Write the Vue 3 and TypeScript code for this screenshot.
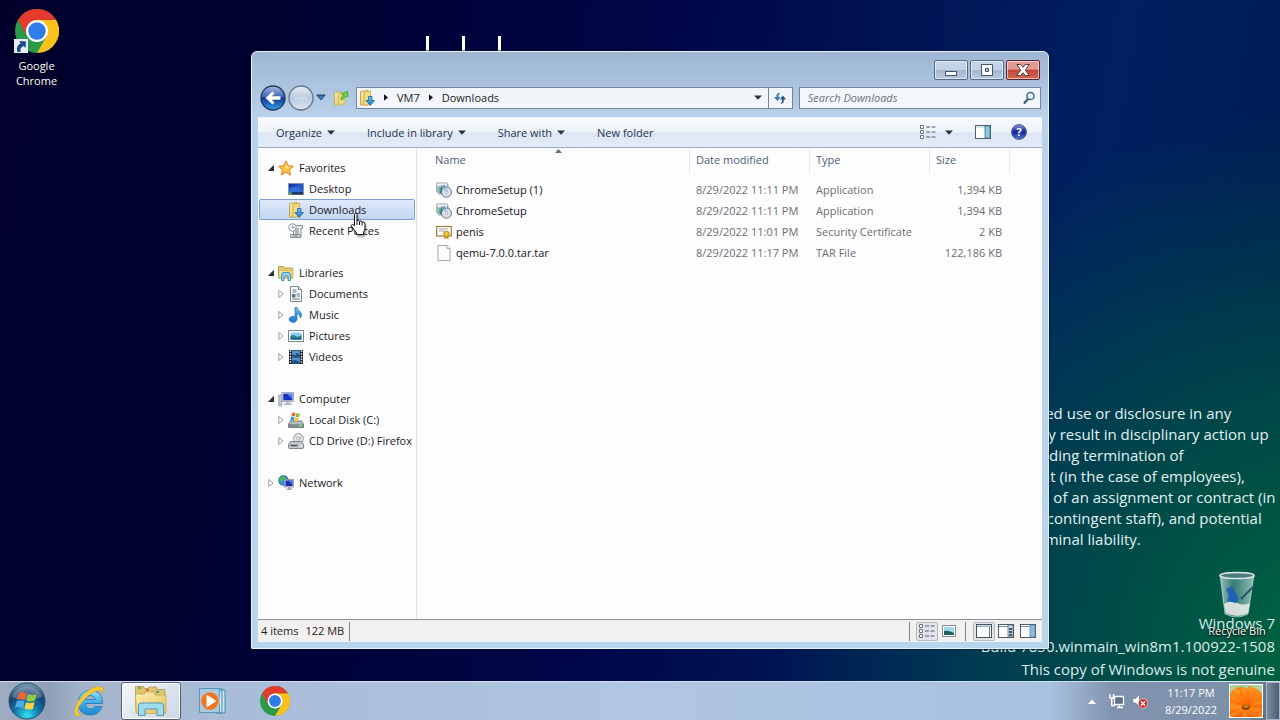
<script setup lang="ts">
import { ref } from 'vue'

interface NavItem { label: string; icon: string }
interface NavGroup { label: string; icon: string; open: boolean; twisty: boolean; items: NavItem[] }
interface FileRow { name: string; icon: string; date: string; type: string; size: string }

const groups: NavGroup[] = [
  {
    label: 'Favorites', icon: 'star', open: true, twisty: false,
    items: [
      { label: 'Desktop', icon: 'desktop' },
      { label: 'Downloads', icon: 'downloads' },
      { label: 'Recent Places', icon: 'recent' },
    ],
  },
  {
    label: 'Libraries', icon: 'libraries', open: true, twisty: true,
    items: [
      { label: 'Documents', icon: 'document' },
      { label: 'Music', icon: 'music' },
      { label: 'Pictures', icon: 'picture' },
      { label: 'Videos', icon: 'video' },
    ],
  },
  {
    label: 'Computer', icon: 'computer', open: true, twisty: true,
    items: [
      { label: 'Local Disk (C:)', icon: 'disk' },
      { label: 'CD Drive (D:) Firefox', icon: 'cd' },
    ],
  },
  { label: 'Network', icon: 'network', open: false, twisty: true, items: [] },
]

const files: FileRow[] = [
  { name: 'ChromeSetup (1)', icon: 'setup', date: '8/29/2022 11:11 PM', type: 'Application', size: '1,394 KB' },
  { name: 'ChromeSetup', icon: 'setup', date: '8/29/2022 11:11 PM', type: 'Application', size: '1,394 KB' },
  { name: 'penis', icon: 'cert', date: '8/29/2022 11:01 PM', type: 'Security Certificate', size: '2 KB' },
  { name: 'qemu-7.0.0.tar.tar', icon: 'blank', date: '8/29/2022 11:17 PM', type: 'TAR File', size: '122,186 KB' },
]

const notice: string[] = [
  'Unauthorized use or disclosure in any',
  'manner may result in disciplinary action up',
  'to and including termination of',
  'employment (in the case of employees),',
  'termination of an assignment or contract (in',
  'the case of contingent staff), and potential',
  'civil and criminal liability.',
]

const menus = [
  { label: 'Organize', drop: true },
  { label: 'Include in library', drop: true },
  { label: 'Share with', drop: true },
  { label: 'New folder', drop: false },
]

const selected = ref('Downloads')
const query = ref('')
</script>

<template>
  <div class="screen">
    <svg class="defs" aria-hidden="true">
      <defs>
        <linearGradient id="gFolder" x1="0" y1="0" x2="1" y2="1"><stop offset="0" stop-color="#fbf0b4" /><stop offset="1" stop-color="#e3c25c" /></linearGradient>
        <linearGradient id="gScreen" x1="0" y1="0" x2="1" y2="1"><stop offset="0" stop-color="#0a1c9c" /><stop offset=".5" stop-color="#2a5fd0" /><stop offset="1" stop-color="#0a2ba8" /></linearGradient>
        <linearGradient id="gBlue" x1="0" y1="0" x2="0" y2="1"><stop offset="0" stop-color="#6fc3f2" /><stop offset="1" stop-color="#1976c4" /></linearGradient>
        <linearGradient id="gBack" x1="0" y1="0" x2="0" y2="1"><stop offset="0" stop-color="#a9bfe6" /><stop offset=".45" stop-color="#3c63b4" /><stop offset=".5" stop-color="#11348f" /><stop offset="1" stop-color="#2fa2e6" /></linearGradient>
        <linearGradient id="gFwd" x1="0" y1="0" x2="0" y2="1"><stop offset="0" stop-color="#e9f0f8" /><stop offset=".5" stop-color="#b8c8db" /><stop offset="1" stop-color="#dbe8f4" /></linearGradient>
        <radialGradient id="gOrb" cx=".5" cy=".9" r=".85"><stop offset="0" stop-color="#35e0f5" /><stop offset=".4" stop-color="#1279ad" /><stop offset=".75" stop-color="#17406e" /><stop offset="1" stop-color="#6f93ad" /></radialGradient>
        <linearGradient id="gIe" x1="0" y1="0" x2="0" y2="1"><stop offset="0" stop-color="#9be3fb" /><stop offset=".5" stop-color="#3daeea" /><stop offset="1" stop-color="#1f86d3" /></linearGradient>
        <linearGradient id="gBin" x1="0" y1="0" x2="1" y2="0"><stop offset="0" stop-color="#b9d6d8" stop-opacity=".85" /><stop offset=".4" stop-color="#5d949a" stop-opacity=".6" /><stop offset="1" stop-color="#b4d4d0" stop-opacity=".85" /></linearGradient>
        <linearGradient id="gPetal" x1="0" y1="0" x2="0" y2="1"><stop offset="0" stop-color="#ffa024" /><stop offset="1" stop-color="#ff5c00" /></linearGradient>
        <symbol id="star" viewBox="0 0 16 16"><path d="M8 .8 10.2 5.7 15.4 6.2 11.5 9.8 12.7 15 8 12.3 3.3 15 4.5 9.8.6 6.2 5.8 5.7Z" fill="#fdc33e" stroke="#d9812c" /><path d="M8 2.6 9.5 6.6 13 7 8 9Z" fill="#ffe79a" /></symbol>
        <symbol id="desktop" viewBox="0 0 16 16"><rect x=".5" y="2.5" width="15" height="11" fill="url(#gScreen)" stroke="#8795a8" /><path d="M1 7Q8 4 15 9V11H1Z" fill="#3979dd" opacity=".7" /><path d="M1 12.5H15" stroke="#20304a" stroke-width="2" /><path d="M1 12.5H4" stroke="#55b865" stroke-width="2" /></symbol>
        <symbol id="downloads" viewBox="0 0 16 16"><path d="M1.5 1.5 9 .5V15H1.5Z" fill="url(#gFolder)" stroke="#c7a747" /><path d="M5 2.5 11.5 1V14L5 15.5Z" fill="#f1dc86" stroke="#d1b55a" /><path d="M9.5 6.5h3.5v4h2.5L11.2 15.5 7 10.5h2.5Z" fill="url(#gBlue)" stroke="#1b639f" stroke-width=".8" /></symbol>
        <symbol id="recent" viewBox="0 0 16 16"><path d="M5.500 2.500h9v3H13V14H5.500Z" fill="#eef0f2" stroke="#858c94" /><path d="M2.500 11.500h10v3h-10z" fill="#d6dade" stroke="#858c94" /><path d="M7 6h4M7 8h4M7 10h4M5 13h5" stroke="#7a828c" /><circle cx="4.500" cy="4.500" r="3.800" fill="#fafafa" stroke="#8f969f" /><path d="M4.500 2.500v2h2" fill="none" stroke="#596069" stroke-width=".8" /></symbol>
        <symbol id="libraries" viewBox="0 0 16 16"><path d="M.5 3.500V1.500h5l1 1.500h8v10H.5Z" fill="#e5cd70" stroke="#bb9f48" /><path d="M1 5.500h14V13H1Z" fill="url(#gFolder)" stroke="#c5aa50" stroke-width=".7" /><path d="M3.500 15.500V10q0-2.500 2.500-2.500h4q2.500 0 2.500 2.500v5.500H10V11H6v4.500Z" fill="#8fd2f0" stroke="#3d8fbd" stroke-width=".9" /></symbol>
        <symbol id="document" viewBox="0 0 16 16"><path d="M2.500.5h8l3 3v12h-11Z" fill="#fdfdfe" stroke="#78868f" /><path d="M10.500.5v3h3" fill="#d8dfe4" stroke="#78868f" /><path d="M4.500 4h4M4.500 6h4M8.500 8H12M8.500 10H12M4.500 13H12" stroke="#60727e" /><path d="M4 8h3.500v3.500H4z" fill="#47749a" /></symbol>
        <symbol id="music" viewBox="0 0 16 16"><path d="M7 .5h2c.3 3 4.500 3.600 4.500 7.200 0 1.500-.7 2.600-1.500 3.300.4-2.500-.8-3.800-3-4.300V12.500A3.900 3 0 1 1 7 9.700Z" fill="url(#gBlue)" stroke="#1d6ba9" stroke-width=".7" /></symbol>
        <symbol id="picture" viewBox="0 0 16 16"><rect x=".5" y="2.500" width="15" height="11" fill="#fff" stroke="#7c868e" /><path d="M2.500 4.500h11v7h-11z" fill="#8bd1ef" /><path d="M2.500 8q3-2 5 0t6-1v4.500h-11z" fill="#2c7f82" /><path d="M2.500 10h11v1.500h-11z" fill="#26579a" /></symbol>
        <symbol id="video" viewBox="0 0 16 16"><path d="M1 1h14v14H1z" fill="#20262c" /><path d="M4 1.500h8V7.500H4zM4 8.500h8v6H4z" fill="#4b94d0" /><path d="M4 5 7 6.500 9 4 12 6v1.500H4zM4 12l3-1 5 2v1.500H4z" fill="#1d5080" /><path d="M2.500 1.500V15M13.500 1.500V15" stroke="#e7eef3" stroke-width="1.400" stroke-dasharray="1.500 1.200" /></symbol>
        <symbol id="computer" viewBox="0 0 16 16"><path d="M.8 4h3v11h-3z" fill="#c4c9cf" stroke="#8b9299" stroke-width=".7" /><rect x="4" y="1.500" width="11.500" height="9" fill="#cdd3da" stroke="#949ba4" stroke-width=".8" /><path d="M5.300 2.800h9v6.400h-9z" fill="#1730c4" /><path d="M9 2.800h5.300V8Z" fill="#5585ec" /><path d="M8.500 10.500h3v2H14v1.500H6v-1.500h2.500z" fill="#aeb5bd" /></symbol>
        <symbol id="disk" viewBox="0 0 16 16"><path d="M2.500 9h11l2 3v3.500H.5V12Z" fill="#b5bfbc" stroke="#5e6a68" stroke-width=".8" /><path d="M1 12.200h14v3H1z" fill="#7c8c88" /><path d="M11 13.500h3" stroke="#79ec75" stroke-width="1.400" /><path d="M4 1Q5.500 0 7.500 1L6.800 4.500Q5 3.700 3.200 4.500Z" fill="#ee6b32" /><path d="M8.200 1.300Q10 2 12 1.200L11 4.900Q9.300 5.500 7.500 4.800Z" fill="#86bb36" /><path d="M3 5.200Q5 4.500 6.600 5.300L5.900 8.800Q4 8 2.200 8.800Z" fill="#3c96d9" /><path d="M7.300 5.700Q9 6.300 10.900 5.700L10 9.300Q8.300 9.900 6.600 9.200Z" fill="#f5c22c" /></symbol>
        <symbol id="cd" viewBox="0 0 16 16"><circle cx="10.500" cy="5.500" r="5" fill="#e6e8ea" stroke="#898e94" stroke-width=".8" /><path d="M10.500 5.500 7 2.500M10.500 5.500 14.500 3.500" stroke="#b2b8bf" /><circle cx="10.500" cy="5.500" r="1.500" fill="#fff" stroke="#84898e" stroke-width=".8" /><path d="M2.500 8.500h11l2 3v3q0 1-1 1h-13q-1 0-1-1v-3Z" fill="#c5c9cd" stroke="#686d72" stroke-width=".8" /><path d="M2.500 12.500h7" stroke="#4c5156" stroke-width="1.300" /><path d="M11.500 13h2.500" stroke="#fff" /></symbol>
        <symbol id="network" viewBox="0 0 16 16"><circle cx="5.500" cy="5.500" r="5" fill="#3690cf" stroke="#1d628f" stroke-width=".6" /><path d="M2 3Q5 0 7 2T4 6 2 8Q0 5 2 3M6 6l3 1-2 3Z" fill="#50b85a" /><rect x="6.500" y="4.500" width="9" height="7.500" fill="#c9d2dc" stroke="#7e8896" stroke-width=".7" /><path d="M7.500 5.500h7v5.500h-7z" fill="#1330b8" /><path d="M10 5.500h4.500V10Z" fill="#4676de" /><path d="M10 12h2.500v1.500H14V15H8.500v-1.500H10z" fill="#a1a9b3" /></symbol>
        <symbol id="setup" viewBox="0 0 16 16"><path d="M.8 1h10l1.200 2v9H3L.8 9Z" fill="#b9cbd5" stroke="#71838f" stroke-width=".8" /><path d="M1 1.500h10v2H1z" fill="#eff6fa" /><path d="M2.500 5h4v5h-4z" fill="#6bb58a" /><path d="M6 3.500 4.500 11M8 3v4" stroke="#36658c" /><circle cx="10.500" cy="10.200" r="5" fill="#dce5ee" stroke="#4e657d" stroke-width=".9" /><path d="M10.500 10.200 7 7A5 5 0 0 1 12 5.500Z" fill="#a8c9e9" /><circle cx="10.500" cy="10.200" r="1.400" fill="#fff" stroke="#6f8499" stroke-width=".6" /></symbol>
        <symbol id="cert" viewBox="0 0 16 16"><rect x=".7" y="2.500" width="14.600" height="9.500" fill="#fffef6" stroke="#96803f" stroke-width="1.200" /><path d="M3 5h9M3 7h6" stroke="#9b9c9c" stroke-width=".9" /><path d="m9 11-.8 4.500L10.500 14l2.300 1.500L12 11Z" fill="#bd8c17" /><circle cx="10.500" cy="10" r="2.800" fill="#f3c836" stroke="#a3780e" stroke-width=".8" /></symbol>
        <symbol id="blank" viewBox="0 0 16 16"><path d="M2 .5h9l3 3v12H2Z" fill="#fdfdfd" stroke="#a8a8a8" /><path d="M11 .5v3h3" fill="#ececec" stroke="#a8a8a8" /></symbol>
        <symbol id="upfolder" viewBox="0 0 16 16"><path d="M1.500 3 8 1.500V15H1.500Z" fill="url(#gFolder)" stroke="#c5ab50" stroke-width=".8" /><path d="M5.500 4 12 2v11.500L5.500 15.500Z" fill="#efd883" stroke="#cdb055" stroke-width=".7" /><path d="M7.500 8.500 10.500 5 8.500 4 14.500 1l.5 6-2-1-3.500 4Z" fill="#6fd244" stroke="#359326" stroke-width=".7" /></symbol>
        <symbol id="list" viewBox="0 0 16 14"><path d="M.5.5h3v3h-3zM.5 5.500h3v3h-3zM.5 10.500h3v3h-3z" fill="#fff" stroke="#68747e" /><path d="M6 2h4M11.500 2h4M6 7h4M11.500 7h4M6 12h4M11.500 12h4" stroke="#4b5b6c" stroke-width="1.200" /></symbol>
        <symbol id="pane" viewBox="0 0 16 14"><rect x=".5" y=".5" width="15" height="13" fill="#fff" stroke="#4f6173" /><path d="M1 1h9v2H1z" fill="#d8e3ea" /><path d="M10 1h5v12h-5z" fill="#86cde0" stroke="#3c7088" stroke-width=".8" /></symbol>
        <symbol id="pane1" viewBox="0 0 16 14"><rect x=".5" y=".5" width="15" height="13" fill="#fff" stroke="#3f5263" /><path d="M1 2.500h14M13.500 3v10" stroke="#5c7788" /><path d="M1 1h14v1.500H1z" fill="#cfe1e9" /></symbol>
        <symbol id="pane2" viewBox="0 0 16 14"><rect x=".5" y=".5" width="15" height="13" fill="#fff" stroke="#4c5c6c" /><path d="M1 2.500h9" stroke="#7c909f" /><path d="M10 1h5v12h-5z" fill="#c7dbe8" stroke="#4c5c6c" stroke-width=".7" /><path d="M11 5h3M11 8h3M11 11h3" stroke="#1d2a35" stroke-width="1.500" /></symbol>
        <symbol id="pane3" viewBox="0 0 16 14"><rect x=".5" y=".5" width="15" height="13" fill="#fff" stroke="#4c5c6c" /><path d="M1 2.500h9" stroke="#7c909f" /><path d="M10 1h5v12h-5z" fill="#8dbce2" stroke="#56809f" stroke-width=".7" /></symbol>
        <symbol id="caret" viewBox="0 0 8 5"><path d="M0 .5h8L4 4.800Z" fill="#233446" /></symbol>
        <symbol id="chrome" viewBox="0 0 48 48">
          <circle cx="24" cy="24" r="24" fill="#2b9a4a" />
          <path d="M3.200 12A24 24 0 0 1 44.800 12H24Z" fill="#e33b2e" />
          <path d="M3.200 12 13.600 30 24 24V12Z" fill="#e33b2e" />
          <path d="M44.800 12A24 24 0 0 1 24 48L34.400 30 24 12Z" fill="#fcc21b" />
          <circle cx="24" cy="24" r="12" fill="#fff" />
          <circle cx="24" cy="24" r="9.500" fill="#2f7be8" />
        </symbol>
      </defs>
    </svg>

    <main class="desktop">
      <button class="shortcut">
        <span class="shortcut-pic">
          <svg class="i44"><use href="#chrome" /></svg>
          <svg class="badge" viewBox="0 0 14 14"><rect width="14" height="14" fill="#e6edf5" /><path d="M3.500 13C2 8.500 4 5.500 6.500 4.800L5.500 2 12 2.500 11.500 9 9.500 7C7 8 6 10 6.500 13Z" fill="#1c4a8c" /></svg>
        </span>
        <span>Google Chrome</span>
      </button>

      <div class="ticks"><i></i><i></i><i></i></div>

      <div class="notice">
        <p v-for="line in notice" :key="line">{{ line }}</p>
      </div>

      <div class="watermark">
        <p>Windows 7</p>
        <p>Build 7850.winmain_win8m1.100922-1508</p>
        <p>This copy of Windows is not genuine</p>
      </div>

      <button class="bin">
        <svg viewBox="0 0 40 48">
          <path d="M3 4 8 43Q20 49 31 43L37 4Z" fill="url(#gBin)" stroke="#d6e6e6" stroke-opacity=".6" />
          <path d="M7 33Q13 29 20 32T33 32L31 42Q20 48 9 42Z" fill="#e5e8e6" opacity=".9" />
          <path d="M9 18 15 15 18 21 22 28 19 32 10 30 12 25Z" fill="#1b5fb8" opacity=".9" />
          <path d="M24 28 36 16" stroke="#28555e" stroke-width="2" />
          <ellipse cx="20" cy="4.500" rx="17" ry="3" fill="#4c7b80" stroke="#dfe9e9" stroke-width="1.500" />
        </svg>
        <span>Recycle Bin</span>
      </button>

      <section class="window" aria-label="Downloads">
        <header class="title">
          <button class="cap" aria-label="Minimize"><svg viewBox="0 0 14 14"><rect x="1.500" y="8.500" width="11" height="4" fill="#fff" stroke="#46536b" /></svg></button>
          <button class="cap" aria-label="Maximize"><svg viewBox="0 0 14 14"><path d="M1.500 1.500h11v11h-11zM5.500 5.500v3h3v-3z" fill="#fff" fill-rule="evenodd" stroke="#46536b" /></svg></button>
          <button class="cap close" aria-label="Close"><svg viewBox="0 0 14 14"><path d="M.8 1.500h4L7 4.300 9.200 1.500h4L9.300 7l3.900 5.500h-4L7 9.700 4.800 12.500h-4L4.700 7Z" fill="#fff" stroke="#5b2b33" stroke-width=".9" /></svg></button>
        </header>

        <div class="navbar">
          <button class="round back" aria-label="Back"><svg viewBox="0 0 26 26"><circle cx="13" cy="13" r="12" fill="url(#gBack)" stroke="#26375f" stroke-width="1.300" /><path d="M5.500 13 12.500 6.500 14.500 8.500 11.800 11.300H20.500V14.800H11.800L14.500 17.600 12.500 19.600Z" fill="#fff" /></svg></button>
          <button class="round fwd" aria-label="Forward"><svg viewBox="0 0 26 26"><circle cx="13" cy="13" r="12" fill="url(#gFwd)" stroke="#65778f" stroke-width="1.300" /><path d="M20 13 14 7.500 12.500 9 15 11.700H6.500V14.400H15L12.500 17 14 18.500Z" fill="#cbd7e5" /></svg></button>
          <button class="recentmenu" aria-label="Recent pages"><svg viewBox="0 0 10 7"><path d="M.8 1h8.400L5 5.800Z" fill="#2e83c0" stroke="#1b3960" /></svg></button>
          <button class="up" aria-label="Up"><svg class="i16"><use href="#upfolder" /></svg></button>
          <div class="address">
            <svg class="i16"><use href="#downloads" /></svg>
            <svg class="tri" viewBox="0 0 5 8"><path d="M0 0 5 4 0 8Z" /></svg>
            <button>VM7</button>
            <svg class="tri" viewBox="0 0 5 8"><path d="M0 0 5 4 0 8Z" /></svg>
            <button>Downloads</button>
            <button class="addrdrop" aria-label="Previous locations"><svg class="caret"><use href="#caret" /></svg></button>
            <button class="refresh" aria-label="Refresh"><svg viewBox="0 0 14 14"><path d="M7 2Q3 1.500 3.500 6H1L4.500 10 7.500 6H5.500Q5 4 7 2Z" fill="#3a73ad" /><path d="M7.500 13Q11.500 12.500 10.700 8.500H13L10 4.500 6.700 8.500H9Q9.500 11 7.500 13Z" fill="#23588f" /></svg></button>
          </div>
          <label class="search">
            <input v-model="query" type="text" placeholder="Search Downloads" aria-label="Search Downloads">
            <svg class="lens" viewBox="0 0 14 14"><circle cx="8.500" cy="5" r="3.600" fill="#eef6fc" stroke="#3b6f9b" stroke-width="1.500" /><path d="M6 8 2 12.500" stroke="#36597d" stroke-width="2.200" /></svg>
          </label>
        </div>

        <div class="client">
          <div class="toolbar">
            <button v-for="m in menus" :key="m.label" class="menu">{{ m.label }}<svg v-if="m.drop" class="caret"><use href="#caret" /></svg></button>
            <div class="tools">
              <button aria-label="Change your view"><svg class="pic"><use href="#list" /></svg></button>
              <button class="more" aria-label="More options"><svg class="caret"><use href="#caret" /></svg></button>
              <button class="paneb" aria-label="Show the preview pane"><svg class="pic"><use href="#pane" /></svg></button>
              <button class="help" aria-label="Help">?</button>
            </div>
          </div>

          <div class="body">
            <nav class="tree">
              <div v-for="g in groups" :key="g.label" class="group">
                <button class="node">
                  <svg v-if="g.open" class="twist" viewBox="0 0 8 8"><path d="M7 .8V7H.8Z" fill="#303030" /></svg>
                  <svg v-else class="twist" viewBox="0 0 8 8"><path d="M1.800.5 6 4 1.800 7.500Z" fill="#fff" stroke="#9a9a9a" /></svg>
                  <svg class="i16"><use :href="'#' + g.icon" /></svg><span>{{ g.label }}</span>
                </button>
                <button
                  v-for="it in g.items" :key="it.label" class="node child"
                  :class="{ selected: selected === it.label }" @click="selected = it.label"
                >
                  <svg class="twist" viewBox="0 0 8 8"><path v-if="g.twisty" d="M1.800.5 6 4 1.800 7.500Z" fill="#fff" stroke="#9a9a9a" /></svg>
                  <svg class="i16"><use :href="'#' + it.icon" /></svg><span>{{ it.label }}</span>
                </button>
              </div>
            </nav>

            <div class="list">
              <table>
                <colgroup><col class="c-name"><col class="c-date"><col class="c-type"><col class="c-size"><col></colgroup>
                <thead>
                  <tr>
                    <th class="sorted">Name<svg viewBox="0 0 7 4"><path d="M0 4 3.500 0 7 4Z" fill="#5d7186" /></svg></th>
                    <th>Date modified</th><th>Type</th><th>Size</th><td></td>
                  </tr>
                </thead>
                <tbody>
                  <tr v-for="f in files" :key="f.name">
                    <td class="name"><div><svg class="i16"><use :href="'#' + f.icon" /></svg>{{ f.name }}</div></td>
                    <td>{{ f.date }}</td><td>{{ f.type }}</td><td class="size">{{ f.size }}</td><td></td>
                  </tr>
                </tbody>
              </table>
            </div>
          </div>

          <footer class="status">
            <span class="counts"><span>4 items</span><span>122 MB</span></span>
            <span class="modes">
              <button class="on" aria-label="Details view"><svg class="pic"><use href="#list" /></svg></button>
              <button aria-label="Large icons view"><svg class="pic" viewBox="0 0 16 14"><rect x="1.500" y="1.500" width="13" height="11" fill="#fff" stroke="#7d8a92" /><path d="M3 3h10v8H3z" fill="#9edbe6" /><path d="M3 7q4-1 10 2v2H3z" fill="#23605c" /></svg></button>
            </span>
            <span class="modes last">
              <button class="on" aria-label="Plain layout"><svg class="pic"><use href="#pane1" /></svg></button>
              <button aria-label="Details layout"><svg class="pic"><use href="#pane2" /></svg></button>
              <button aria-label="Preview layout"><svg class="pic"><use href="#pane3" /></svg></button>
            </span>
          </footer>
        </div>
      </section>

      <svg class="pointer" viewBox="0 0 17 24"><path d="M5 1.500Q6.700.5 7 2.500V9Q8.500 7.500 9.500 9.200 11 8 12 10 14.500 9 15 12V16Q15 19 13.500 20.500V22.500H6.500V20.500Q4 18 1 13.500 2 11.500 4.500 13.500V2.500Z" fill="#fff" stroke="#101018" /><path d="M7 9v4M9.500 9.500V13M12 10.200V13.500" stroke="#101018" fill="none" /></svg>
    </main>

    <footer class="taskbar">
      <button class="orb" aria-label="Start">
        <svg viewBox="0 0 38 38"><circle cx="19" cy="19" r="18" fill="url(#gOrb)" stroke="#2d4f70" /><path d="M4 15A16 16 0 0 1 34 15Q19 21 4 15Z" fill="#fff" opacity=".25" />
          <path d="M11 11Q14 9 18.500 11.500L17 18Q13 16 9 18Z" fill="#f0642d" /><path d="M20 12Q24 14 28.500 12L27 18.500Q23 20.500 18.500 18.700Z" fill="#93cb3e" /><path d="M8.700 19.500Q12.500 17.500 16.600 19.500L15 26Q11 24 7 26Z" fill="#49aef0" /><path d="M18 20.200Q22 22 26.500 20L25 26.800Q21 28.500 16.500 26.500Z" fill="#fdd23c" /></svg>
      </button>
      <button class="task" aria-label="Internet Explorer">
        <svg viewBox="0 0 34 34"><path d="M30.500 19.500H13.500Q14 25 18.500 25 21.500 25 22.800 22.500H30Q27 31 18.500 31 6.500 31 6.500 18.700 6.500 6.500 18.500 6.500 31 7 30.500 19.500ZM13.500 15.500H23.500Q22.800 11.500 18.500 11.500 14.300 11.500 13.500 15.500Z" fill="url(#gIe)" stroke="#2376ae" stroke-width=".8" /><path d="M8 31.500Q2 34.500 2.500 27 4 17 14 8.500T30.500 3.500Q32.500 5 30.500 10 30.500 5 25.500 6.500 17 9 10.500 17.500T6 28.500Q6.500 31.500 10 30Z" fill="#f6cc33" stroke="#cf9b1d" stroke-width=".5" /></svg>
      </button>
      <button class="task active" aria-label="Windows Explorer">
        <svg viewBox="0 0 34 34"><path d="M1.500 6V2.500h8l1 2H14l1-1.500h7l1 2.500h8V29h-29Z" fill="#dfc66a" stroke="#a98e3f" stroke-width=".7" /><path d="M1.500 10h9l1-2H20l1 3h11v18.500H2.500Z" fill="url(#gFolder)" stroke="#c2a450" stroke-width=".7" /><path d="M4 4h3" stroke="#47a057" stroke-width="1.500" /><path d="M12 6h3" stroke="#c34a36" stroke-width="1.500" /><path d="M22 8h3" stroke="#3c80c4" stroke-width="1.500" /><path d="M4.500 31.500V22q0-3 3-3h19q3 0 3 3v9.500H23V25H11v6.500Z" fill="#9edcf0" stroke="#5198b8" /></svg>
      </button>
      <button class="task" aria-label="Windows Media Player">
        <svg viewBox="0 0 34 34"><path d="M24 6h5v23h-5M20 5h6v24h-6" fill="#c9e6f3" stroke="#4389b5" /><rect x="3.500" y="4.500" width="20" height="24" fill="#a5cbe3" stroke="#5c95ba" /><circle cx="14" cy="17" r="9.500" fill="#ee7522" stroke="#b9c8d2" stroke-width="1.500" /><path d="M10.500 10.500 20.500 17 10.500 23.500Z" fill="#fff" /></svg>
      </button>
      <button class="task" aria-label="Google Chrome"><svg class="i30"><use href="#chrome" /></svg></button>

      <div class="tray">
        <button aria-label="Show hidden icons"><svg class="up-tri" viewBox="0 0 8 5"><path d="M0 5 4 .5 8 5Z" fill="#fff" /></svg></button>
        <button aria-label="Network"><svg class="i16" viewBox="0 0 16 16"><path d="M5.500 3.500h9v8h-9zM8 14.500h6M10.500 12v2.500" fill="#5e718a" stroke="#fff" stroke-width="1.300" /><path d="M1 1v4h3.500V1M2.700 5v7.500H6" fill="none" stroke="#fff" stroke-width="1.400" /></svg></button>
        <button aria-label="Volume muted"><svg class="i16" viewBox="0 0 16 16"><path d="M.8 5.500h2.500L7.500 1.500v12L3.300 10H.8Z" fill="#fff" stroke="#51617b" stroke-width=".6" /><circle cx="11" cy="10.500" r="4.700" fill="#d92b25" stroke="#fff" stroke-width=".5" /><path d="m9 8.500 4 4m0-4-4 4" stroke="#fff" stroke-width="1.500" /></svg></button>
        <button class="clock"><span>11:17 PM</span><span>8/29/2022</span></button>
        <button class="user" aria-label="User account">
          <svg viewBox="0 0 32 32"><rect width="32" height="32" fill="#f88b1c" /><path d="M0 0h32v8L24 3 16 6 8 2 0 8Z" fill="#b5cf9a" />
            <g stroke="#f06a00" stroke-width=".5" fill="url(#gPetal)"><path d="M16 21 10 2 18 4Z" /><path d="M16 21 19 1 27 5Z" /><path d="M16 21 2 6 9 3Z" /><path d="M16 21 28 5 32 13Z" /><path d="M16 21 0 10 0 17Z" /><path d="M16 21 32 16 32 23Z" /><path d="M16 21 0 20 0 29Z" /><path d="M16 21 32 26 27 32Z" /><path d="M16 21 4 32 12 32Z" /><path d="M16 21 17 32 25 32Z" /></g>
            <ellipse cx="16" cy="22" rx="4" ry="3" fill="#8c3b05" /><ellipse cx="16" cy="21" rx="3" ry="2" fill="#ce7712" /></svg>
        </button>
        <button class="peek" aria-label="Show desktop"></button>
      </div>
    </footer>
  </div>
</template>

<style>
html, body, #app { height: 100%; }
body { margin: 0; overflow: hidden; }
</style>

<style scoped>
.screen {
  height: 100vh;
  display: flex;
  flex-direction: column;
  overflow: hidden;
  font: 11px/21px "Open Sans", "Noto Sans", sans-serif;
  color: #1a1a24;
  background:
    radial-gradient(ellipse 44% 75% at 104% 90%, #006840 0%, rgba(0, 96, 64, .75) 35%, rgba(0, 70, 80, 0) 100%),
    linear-gradient(100deg, #00002b 0%, #00002f 20%, #00074a 50%, #002060 80%, #001a50 100%);
}
.defs { position: absolute; width: 0; height: 0; }
button { font: inherit; color: inherit; background: none; border: 0; padding: 0; margin: 0; text-align: left; white-space: nowrap; }
svg { display: block; flex: none; }
p { margin: 0; }
.i16 { width: 16px; height: 16px; }
.i30 { width: 30px; height: 30px; }
.i44 { width: 44px; height: 44px; }
.pic { width: 16px; height: 14px; }
.caret { width: 8px; height: 5px; }

.desktop { position: relative; flex: 1; min-height: 0; }
.shortcut {
  position: absolute; left: 0; top: 9px; width: 73px;
  display: flex; flex-direction: column; align-items: center; gap: 5px;
  white-space: normal; text-align: center; line-height: 15px; color: #fff;
  text-shadow: 0 1px 2px #000;
}
.shortcut-pic { position: relative; }
.badge { position: absolute; left: -1px; bottom: 0; width: 14px; height: 14px; }
.ticks { position: absolute; left: 426px; top: 36px; display: flex; gap: 33px; }
.ticks i { width: 3px; height: 20px; background: #fff; }
.notice { position: absolute; right: 5px; top: 403px; width: 308px; color: #e3f1f3; font-size: 15px; line-height: 21px; white-space: nowrap; }
.watermark { position: absolute; right: 5px; bottom: 0; text-align: right; color: #dcebec; font-size: 15px; line-height: 23px; }
.bin {
  position: absolute; right: 13px; top: 571px; width: 60px;
  display: flex; flex-direction: column; align-items: center; color: #fff;
  text-shadow: 0 1px 2px #000, 0 0 2px #000; line-height: 15px; gap: 4px;
}
.bin svg { width: 40px; height: 48px; }
.pointer { position: absolute; left: 350px; top: 212px; width: 17px; height: 24px; filter: drop-shadow(1px 2px 1px rgba(0, 0, 0, .35)); }

.window {
  position: absolute; left: 251px; right: 231px; top: 51px; bottom: 32px;
  box-sizing: border-box; display: flex; flex-direction: column;
  padding: 0 6px 6px; border: 1px solid #e6f2fb; border-radius: 6px 6px 1px 1px;
  background: linear-gradient(#9fb6d2 0, #a9c0dc 24px, #b9d1ea 66px, #b9d5ec 100%);
  box-shadow: 0 0 0 1px rgba(10, 20, 40, .5);
}
.title { height: 32px; display: flex; justify-content: flex-end; gap: 2px; padding: 8px 2px 0; box-sizing: border-box; }
.cap {
  width: 34px; height: 20px; box-sizing: border-box; display: flex; align-items: center; justify-content: center;
  border: 1px solid #55698a; border-radius: 2px; box-shadow: inset 0 0 0 1px rgba(255, 255, 255, .55);
  background: linear-gradient(#c3d3e6 0 48%, #a2b6cf 52%, #b9cbe0);
}
.cap svg { width: 14px; height: 14px; }
.close { border-color: #5b2730; background: linear-gradient(#e19a90 0 45%, #c04538 52%, #cf6a54); }
.navbar { height: 33px; display: flex; align-items: center; padding: 0 1px 6px 2px; box-sizing: border-box; }
.round svg { width: 26px; height: 26px; }
.fwd { margin-left: 2px; }
.recentmenu { margin-left: 2px; }
.recentmenu svg { width: 10px; height: 7px; }
.up { margin: 0 7px; }
.address {
  flex: 432; height: 22px; box-sizing: border-box; display: flex; align-items: center; gap: 9px; padding-left: 2px;
  border: 1px solid #75879f; background: #f2f6fb; min-width: 0;
}
.tri { width: 4px; height: 7px; fill: #10101c; }
.addrdrop { margin-left: auto; }
.refresh { align-self: stretch; width: 24px; display: flex; align-items: center; justify-content: center; border-left: 1px solid #75879f; margin-left: -3px; }
.refresh svg { width: 14px; height: 14px; }
.search {
  flex: 228; height: 22px; box-sizing: border-box; display: flex; align-items: center; margin-left: 6px; padding: 0 4px 0 8px;
  border: 1px solid #75879f; background: #f3f7fc; min-width: 0;
}
.lens { width: 14px; height: 14px; }
.search input { flex: 1; min-width: 0; border: 0; padding: 0; background: none; outline: 0; font: inherit; }
.search input::placeholder { color: #6d737d; font-style: italic; opacity: 1; }

.client { flex: 1; min-height: 0; display: flex; flex-direction: column; background: #fdfdfe; border-top: 1px solid #eef5fb; }
.toolbar {
  height: 30px; flex: none; box-sizing: border-box; display: flex; align-items: center; padding: 0 15px 1px 18px; gap: 32px;
  color: #23314e; border-bottom: 1px solid #97aac8;
  background: linear-gradient(#f8fafd 0, #edf3fb 48%, #dde7f4 52%, #e2ebf7);
}
.menu { display: flex; align-items: center; gap: 5px; }
.tools { margin-left: auto; display: flex; align-items: center; }
.more { margin-left: 9px; }
.paneb { margin-left: 22px; }
.help {
  margin-left: 20px; width: 16px; height: 16px; box-sizing: border-box; border-radius: 50%; text-align: center;
  font: bold 11px/14px "Open Sans", sans-serif; color: #fff; border: 1px solid #55628c;
  background: linear-gradient(#7c8ed2, #16259a 50%, #4c74cc);
}
.body { flex: 1; min-height: 0; display: flex; }
.tree { width: 159px; flex: none; box-sizing: border-box; padding: 9px 1px 0; border-right: 1px solid #dce6f2; overflow: hidden; }
.group { display: flex; flex-direction: column; margin-bottom: 21px; }
.node { height: 21px; box-sizing: border-box; display: flex; align-items: center; gap: 3px; padding-left: 7px; border: 1px solid transparent; border-radius: 2px; overflow: hidden; }
.node.child { padding-left: 17px; }
.node .i16 { margin-right: 2px; }
.twist { width: 8px; height: 8px; }
.selected { border-color: #7c9fd6; background: linear-gradient(#dfe9fa, #c3d6f3); }

.list { flex: 1; min-width: 0; overflow: hidden; color: #6d6d72; }
table { width: 100%; table-layout: fixed; border-collapse: separate; border-spacing: 0; }
.c-name { width: 273px; }
.c-date, .c-type { width: 120px; }
.c-size { width: 80px; }
th { position: relative; height: 26px; box-sizing: border-box; font-weight: 400; text-align: left; padding: 0 0 2px 6px; color: #4c607a; border-right: 1px solid #e2e9f2; line-height: 24px; }
th.sorted { padding-left: 18px; }
th svg { position: absolute; left: 138px; top: 1px; width: 7px; height: 4px; }
thead::after { content: ""; display: block; height: 5px; }
td { padding: 0 0 0 6px; height: 21px; white-space: nowrap; }
td.name { padding-left: 19px; color: #14141c; }
td.name div { display: flex; align-items: center; gap: 4px; }
td.size { text-align: right; padding-right: 8px; }

.status { height: 23px; flex: none; box-sizing: border-box; display: flex; align-items: center; border-top: 1px solid #8b919a; background: #f3f0f0; color: #1c1c22; }
.counts { display: flex; gap: 7px; padding: 0 5px 2px 3px; border-right: 1px solid #808080; line-height: 17px; margin-right: auto; }
.modes { display: flex; align-items: center; padding: 0 5px 0 6px; border-left: 1px solid #808080; height: 19px; }
.modes.last { padding: 0 3px 0 7px; }
.modes button { width: 22px; height: 19px; box-sizing: border-box; display: flex; align-items: center; justify-content: center; border: 1px solid transparent; border-radius: 2px; }
.modes .on { border-color: #b6b8bf; background: #e3e4e9; }

.taskbar {
  height: 39px; flex: none; box-sizing: border-box; display: flex; align-items: center; border-top: 1px solid #d3dfee;
  background: linear-gradient(90deg, #a0aec2 0, #8f9fb7 50px, #a3b3ca 80px, #a9bcd6 200px, #afc5e2 50%, #a9c2e0 82%, #8193ae 87%, #7d90a9 97%, #52667c 100%);
}
.orb { margin: 0 13px 0 8px; }
.orb svg { width: 38px; height: 38px; }
.task { width: 60px; height: 38px; box-sizing: border-box; display: flex; align-items: center; justify-content: center; margin-right: 2px; border: 1px solid transparent; border-radius: 3px; }
.task svg { width: 34px; height: 34px; }
.task .i30 { width: 30px; height: 30px; }
.active { border-color: #4f6079; box-shadow: inset 0 0 0 1px #fff; background: linear-gradient(135deg, #f4f7fb, #cbd6e6); }
.tray { margin-left: auto; align-self: stretch; display: flex; align-items: center; color: #fff; }
.up-tri { width: 8px; height: 5px; margin-right: 13px; }
.tray .i16 { margin-right: 7px; }
.clock { display: flex; flex-direction: column; text-align: center; line-height: 17px; margin: 0 12px 0 10px; }
.user { width: 34px; height: 34px; box-sizing: border-box; border: 1px solid #fff; }
.user svg { width: 32px; height: 32px; }
.peek { width: 14px; align-self: stretch; margin-left: 3px; border: 1px solid #a9b6c5; background: linear-gradient(90deg, #7d8b9c, #4c5c70); }
</style>
